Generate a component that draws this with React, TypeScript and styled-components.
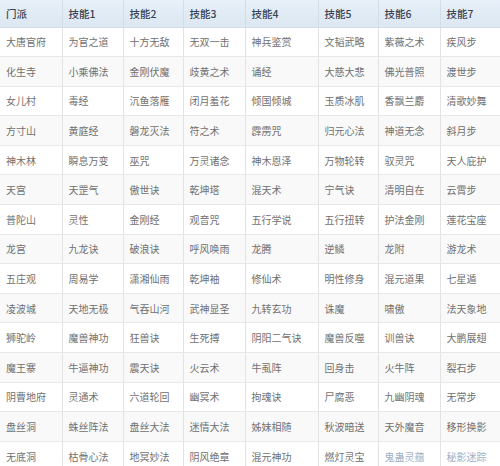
import React from 'react'
import styled, { createGlobalStyle } from 'styled-components'

const GlobalStyle = createGlobalStyle`
  html, body {
    margin: 0;
    padding: 0;
    background: #ffffff;
    overflow: hidden;
  }
`

const COLS = [62, 61, 60, 62, 73, 60, 62, 60]

const HEAD = ['门派', '技能1', '技能2', '技能3', '技能4', '技能5', '技能6', '技能7']

const ROWS = [
  ['大唐官府', '为官之道', '十方无敌', '无双一击', '神兵鉴赏', '文韬武略', '紫薇之术', '疾风步'],
  ['化生寺', '小乘佛法', '金刚伏魔', '歧黄之术', '诵经', '大慈大悲', '佛光普照', '渡世步'],
  ['女儿村', '毒经', '沉鱼落雁', '闭月羞花', '倾国倾城', '玉质冰肌', '香飘兰麝', '清歌妙舞'],
  ['方寸山', '黄庭经', '磐龙灭法', '符之术', '霹雳咒', '归元心法', '神道无念', '斜月步'],
  ['神木林', '瞬息万变', '巫咒', '万灵诸念', '神木恩泽', '万物轮转', '驭灵咒', '天人庇护'],
  ['天宫', '天罡气', '傲世诀', '乾坤塔', '混天术', '宁气诀', '清明自在', '云霄步'],
  ['普陀山', '灵性', '金刚经', '观音咒', '五行学说', '五行扭转', '护法金刚', '莲花宝座'],
  ['龙宫', '九龙诀', '破浪诀', '呼风唤雨', '龙腾', '逆鳞', '龙附', '游龙术'],
  ['五庄观', '周易学', '潇湘仙雨', '乾坤袖', '修仙术', '明性修身', '混元道果', '七星遁'],
  ['凌波城', '天地无极', '气吞山河', '武神显圣', '九转玄功', '诛魔', '啸傲', '法天象地'],
  ['狮驼岭', '魔兽神功', '狂兽诀', '生死搏', '阴阳二气诀', '魔兽反噬', '训兽诀', '大鹏展翅'],
  ['魔王寨', '牛逼神功', '震天诀', '火云术', '牛虱阵', '回身击', '火牛阵', '裂石步'],
  ['阴曹地府', '灵通术', '六道轮回', '幽冥术', '拘魂诀', '尸腐恶', '九幽阴魂', '无常步'],
  ['盘丝洞', '蛛丝阵法', '盘丝大法', '迷情大法', '姊妹相随', '秋波暗送', '天外魔音', '移形换影'],
  ['无底洞', '枯骨心法', '地冥妙法', '阴风绝章', '混元神功', '燃灯灵宝', '鬼蛊灵蕴', '秘影迷踪'],
]

const Table = styled.table`
  width: 500px;
  border-collapse: collapse;
  table-layout: fixed;
  font-family: "Noto Sans CJK SC", "Noto Sans", sans-serif;
`

const HeadRow = styled.tr`
  height: 27px;
  background: linear-gradient(#e7f0f9, #dce7f2);
`

const HeadCell = styled.th`
  padding: 0 0 0 6px;
  text-align: left;
  font-size: 10.5px;
  font-weight: 500;
  color: #3a4656;
  border-left: 1px solid #d3dde8;
  border-bottom: 1px solid #d6dfe9;
  white-space: nowrap;

  &:first-child {
    border-left: none;
  }
`

const Row = styled.tr<{ $shade: boolean }>`
  height: 29.6px;
  background: ${p => (p.$shade ? '#f9f9f9' : '#ffffff')};
`

const Cell = styled.td<{ $faded?: boolean }>`
  padding: 0 0 0 6px;
  font-size: 10px;
  color: ${p => (p.$faded ? '#9cb0c6' : '#707070')};
  border-left: 1px solid #e3e3e3;
  border-bottom: 1px solid #e8e8e8;
  white-space: nowrap;
  overflow: hidden;

  &:first-child {
    border-left: none;
  }
`

export default function App() {
  return (
    <>
      <GlobalStyle />
      <Table>
        <colgroup>
          {COLS.map((w, i) => (
            <col key={i} style={{ width: w }} />
          ))}
        </colgroup>
        <thead>
          <HeadRow>
            {HEAD.map(h => (
              <HeadCell key={h}>{h}</HeadCell>
            ))}
          </HeadRow>
        </thead>
        <tbody>
          {ROWS.map((r, ri) => (
            <Row key={r[0]} $shade={ri % 2 === 1}>
              {r.map((c, ci) => (
                <Cell key={ci} $faded={ri === ROWS.length - 1 && ci >= 6}>
                  {c}
                </Cell>
              ))}
            </Row>
          ))}
        </tbody>
      </Table>
    </>
  )
}
